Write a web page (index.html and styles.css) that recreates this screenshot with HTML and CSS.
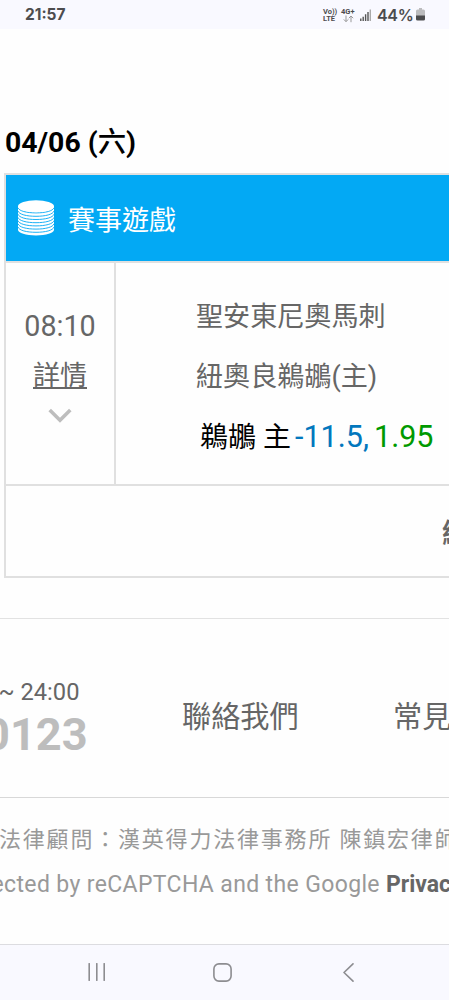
FILE: index.html
```html
<!DOCTYPE html>
<html lang="zh-Hant">
<head>
<meta charset="utf-8">
<title>賽事遊戲</title>
<link rel="stylesheet" href="styles.css">
</head>
<body>
<header class="status">
  <span class="clock">21:57</span>
  <span class="net volte"><b>Vo))</b><b>LTE</b></span>
  <span class="net data"><b>4G+</b>
    <svg width="11" height="8" viewBox="0 0 11 8"><path d="M3 .5v6M.8 4.4 3 6.7l2.2-2.3M8 7.2V1M5.8 3.2 8 1l2.2 2.2"/></svg>
  </span>
  <svg class="signal" width="11" height="12" viewBox="0 0 11 12"><path d="M.8 12V9.5M3.2 12V7.7M5.6 12V5.3M8 12V3" stroke="#555"/><path d="M10.3 12V.5" stroke="#aaa"/></svg>
  <span class="percent">44%</span>
  <svg class="battery" width="9" height="13" viewBox="0 0 9 13"><path d="M3 0h3v1.4h1.5Q9 1.4 9 3v5H0V3q0-1.6 1.5-1.6H3z" fill="#bcbcbe"/><path d="M0 7.6h9v3.6q0 1.4-1.5 1.4h-6Q0 12.6 0 11.2z" fill="#4c4c4e"/></svg>
</header>
<main>
  <h1 class="date">04/06 (<span>六</span>)</h1>
  <section class="card">
    <div class="card-head">
      <svg class="coins" width="36" height="36" viewBox="0 0 36 36">
        <path d="M0 6.2v23.6c0 3.3 8 5.7 18 5.7s18-2.4 18-5.7V6.2z" fill="#fff"/>
        <g fill="none" stroke="#03a9f4" stroke-width=".9">
          <path d="M0 7.6c1 3.4 8.5 5.3 18 5.3s17-1.9 18-5.3"/>
          <path d="M0 11c1 3.4 8.5 5.3 18 5.3s17-1.9 18-5.3"/>
          <path d="M0 14.2c1 3.4 8.5 5.3 18 5.3s17-1.9 18-5.3"/>
          <path d="M0 17.4c1 3.4 8.5 5.3 18 5.3s17-1.9 18-5.3"/>
          <path d="M0 20.6c1 3.4 8.5 5.3 18 5.3s17-1.9 18-5.3"/>
          <path d="M0 23.8c1 3.4 8.5 5.3 18 5.3s17-1.9 18-5.3"/>
          <path d="M0 27c1 3.4 8.5 5.3 18 5.3s17-1.9 18-5.3"/>
        </g>
        <ellipse cx="18" cy="6.3" rx="18" ry="6" fill="#fff"/>
      </svg>
      <span>賽事遊戲</span>
    </div>
    <div class="match">
      <div class="when">
        <span class="time">08:10</span>
        <a class="detail">詳情</a>
        <svg width="24" height="16" viewBox="0 0 24 16"><path d="M1.7 2 12 12.2 22.3 2" fill="none" stroke="#bdbdbd" stroke-width="3.6"/></svg>
      </div>
      <div class="teams">
        <span class="team">聖安東尼奧馬刺</span>
        <span class="team">紐奧良鵜鶘(主)</span>
        <div class="bet"><span class="pick">鵜鶘 主</span><span class="spread">-11.5,</span><span class="odds">1.95</span></div>
      </div>
    </div>
    <div class="total">總</div>
  </section>
</main>
<footer>
  <div class="contact">
    <div class="phone"><span class="hours">~ 24:00</span><span class="number">0123</span></div>
    <a class="link-contact">聯絡我們</a>
    <a class="link-faq">常見</a>
  </div>
  <div class="legal">
    <p class="counsel">法律顧問：漢英得力法律事務所 陳鎮宏律師</p>
    <p class="captcha"><span>ected by reCAPTCHA and the Google&nbsp;</span></p><p class="privacy">Privac</p>
  </div>
</footer>
<nav class="nav">
  <svg width="18" height="18" viewBox="0 0 18 18"><path d="M1.2 .7v16.6M8.8 .7v16.6M16.2 .7v16.6"/></svg>
  <svg class="home" width="19" height="19" viewBox="0 0 19 19"><rect x=".9" y=".9" width="17.2" height="17.2" rx="5"/></svg>
  <svg width="11" height="19" viewBox="0 0 11 19"><path d="M10 .8 1 9.5l9 8.7"/></svg>
</nav>
</body>
</html>
```
FILE: styles.css
```css
* { box-sizing: border-box; }
body {
  margin: 0;
  width: 449px;
  height: 1000px;
  display: flex;
  flex-direction: column;
  overflow: hidden;
  background: #fefefe;
  color: #666;
  font-family: Roboto, "Noto Sans CJK TC", sans-serif;
  white-space: nowrap;
}
h1, p { margin: 0; }
svg { display: block; flex: none; }

.status {
  height: 29px;
  flex: none;
  display: flex;
  align-items: flex-start;
  padding-left: 25px;
  background: #f9f9ff;
  color: #4c4c4e;
}
.clock {
  width: 298px;
  margin-top: 5px;
  font: 700 15.5px/20px Inter, sans-serif;
}
.net {
  display: flex;
  flex-direction: column;
  margin-top: 8px;
  font-size: 7.5px;
  line-height: 7px;
}
.volte { width: 18px; }
.data { width: 19px; }
.data svg { margin-left: 2px; fill: none; stroke: #999; }
.signal { margin-top: 9px; stroke-width: 1.4; }
.percent {
  width: 39px;
  margin: 5px 0 0 6px;
  font: 600 16px/20px Inter, sans-serif;
  letter-spacing: -.3px;
}
.battery { margin-top: 8px; }

main {
  height: 590px;
  flex: none;
  overflow: hidden;
  padding-left: 4px;
  border-bottom: 1px solid #e2e2e2;
}
.date {
  height: 144px;
  padding: 98px 0 0 1px;
  color: #000;
  font-size: 28.4px;
  line-height: 32px;
}
.date span { font-weight: 500; }
.card { width: 445px; border: solid #e0e0e0; border-width: 2px 0 2px 2px; height: 405px; overflow: hidden; }
.card-head {
  height: 86px;
  display: flex;
  align-items: center;
  gap: 15px;
  padding-left: 12px;
  background: #03a9f4;
  color: #fff;
  font-size: 27px;
}
.card-head span { margin-left: -1px; }
.match { display: flex; height: 225px; border: solid #e0e0e0; border-width: 2px 0; }
.when {
  width: 110px;
  flex: none;
  border-right: 2px solid #e0e0e0;
  display: flex;
  flex-direction: column;
  align-items: center;
}
.time { margin-top: 46px; font-size: 28.7px; line-height: 34px; }
.detail {
  height: 28px;
  margin-top: 18px;
  border-bottom: 2px solid #666;
  font-size: 27px;
  line-height: 31px;
}
.when svg { margin-top: 19px; }
.teams { padding-left: 80px; display: flex; flex-direction: column; }
.team { font-size: 27.1px; line-height: 40px; margin-top: 34px; }
.team + .team { margin-top: 20px; }
.bet { display: flex; padding-left: 4px; margin-top: 20px; line-height: 40px; }
.pick { width: 95px; padding-top: 1px; color: #000; font-size: 28px; }
.spread { width: 79px; color: #0277bd; font-size: 30.5px; }
.odds { color: #090; font-size: 30.5px; }
.total { padding: 28px 0 0 436px; font-size: 27px; line-height: 40px; font-weight: 700; }

.contact {
  display: flex;
  height: 179px;
  align-items: flex-start;
  overflow: hidden;
  border-bottom: 1px solid #d8d8d8;
}
.phone { width: 182px; flex: none; display: flex; flex-direction: column; align-items: flex-start; }
.hours { margin: 59px 0 0 -1.5px; font-size: 23.7px; line-height: 28px; }
.number {
  margin: 4px 0 0 -16px;
  color: #bdbdbd;
  font-size: 45.2px;
  line-height: 50px;
  font-weight: 700;
}
.link-contact, .link-faq { flex: none; margin-top: 78px; font-size: 29.2px; line-height: 40px; }
.link-contact { width: 211px; }
.legal { display: grid; grid-template-columns: 386px 63px; width: 449px; overflow: hidden; color: #999; }
.counsel { grid-column: 1 / 3; margin-top: 26px; margin-left: -1px; font-size: 22px; line-height: 32px; letter-spacing: 1.8px; }
.captcha, .privacy { margin-top: 15px; font-size: 23px; line-height: 28px; }
.captcha { display: flex; justify-content: flex-end; letter-spacing: .36px; }
.privacy { color: #666; font-weight: 700; }

.nav {
  height: 56px;
  margin-top: auto;
  flex: none;
  display: flex;
  justify-content: space-between;
  padding: 18px 95px 0 88px;
  border-top: 1px solid #dcdce0;
  background: #f9f9ff;
  fill: none;
  stroke: #8d8d91;
  stroke-width: 1.6;
  stroke-linecap: round;
  stroke-linejoin: round;
}
.home { margin-right: 4px; }
```
